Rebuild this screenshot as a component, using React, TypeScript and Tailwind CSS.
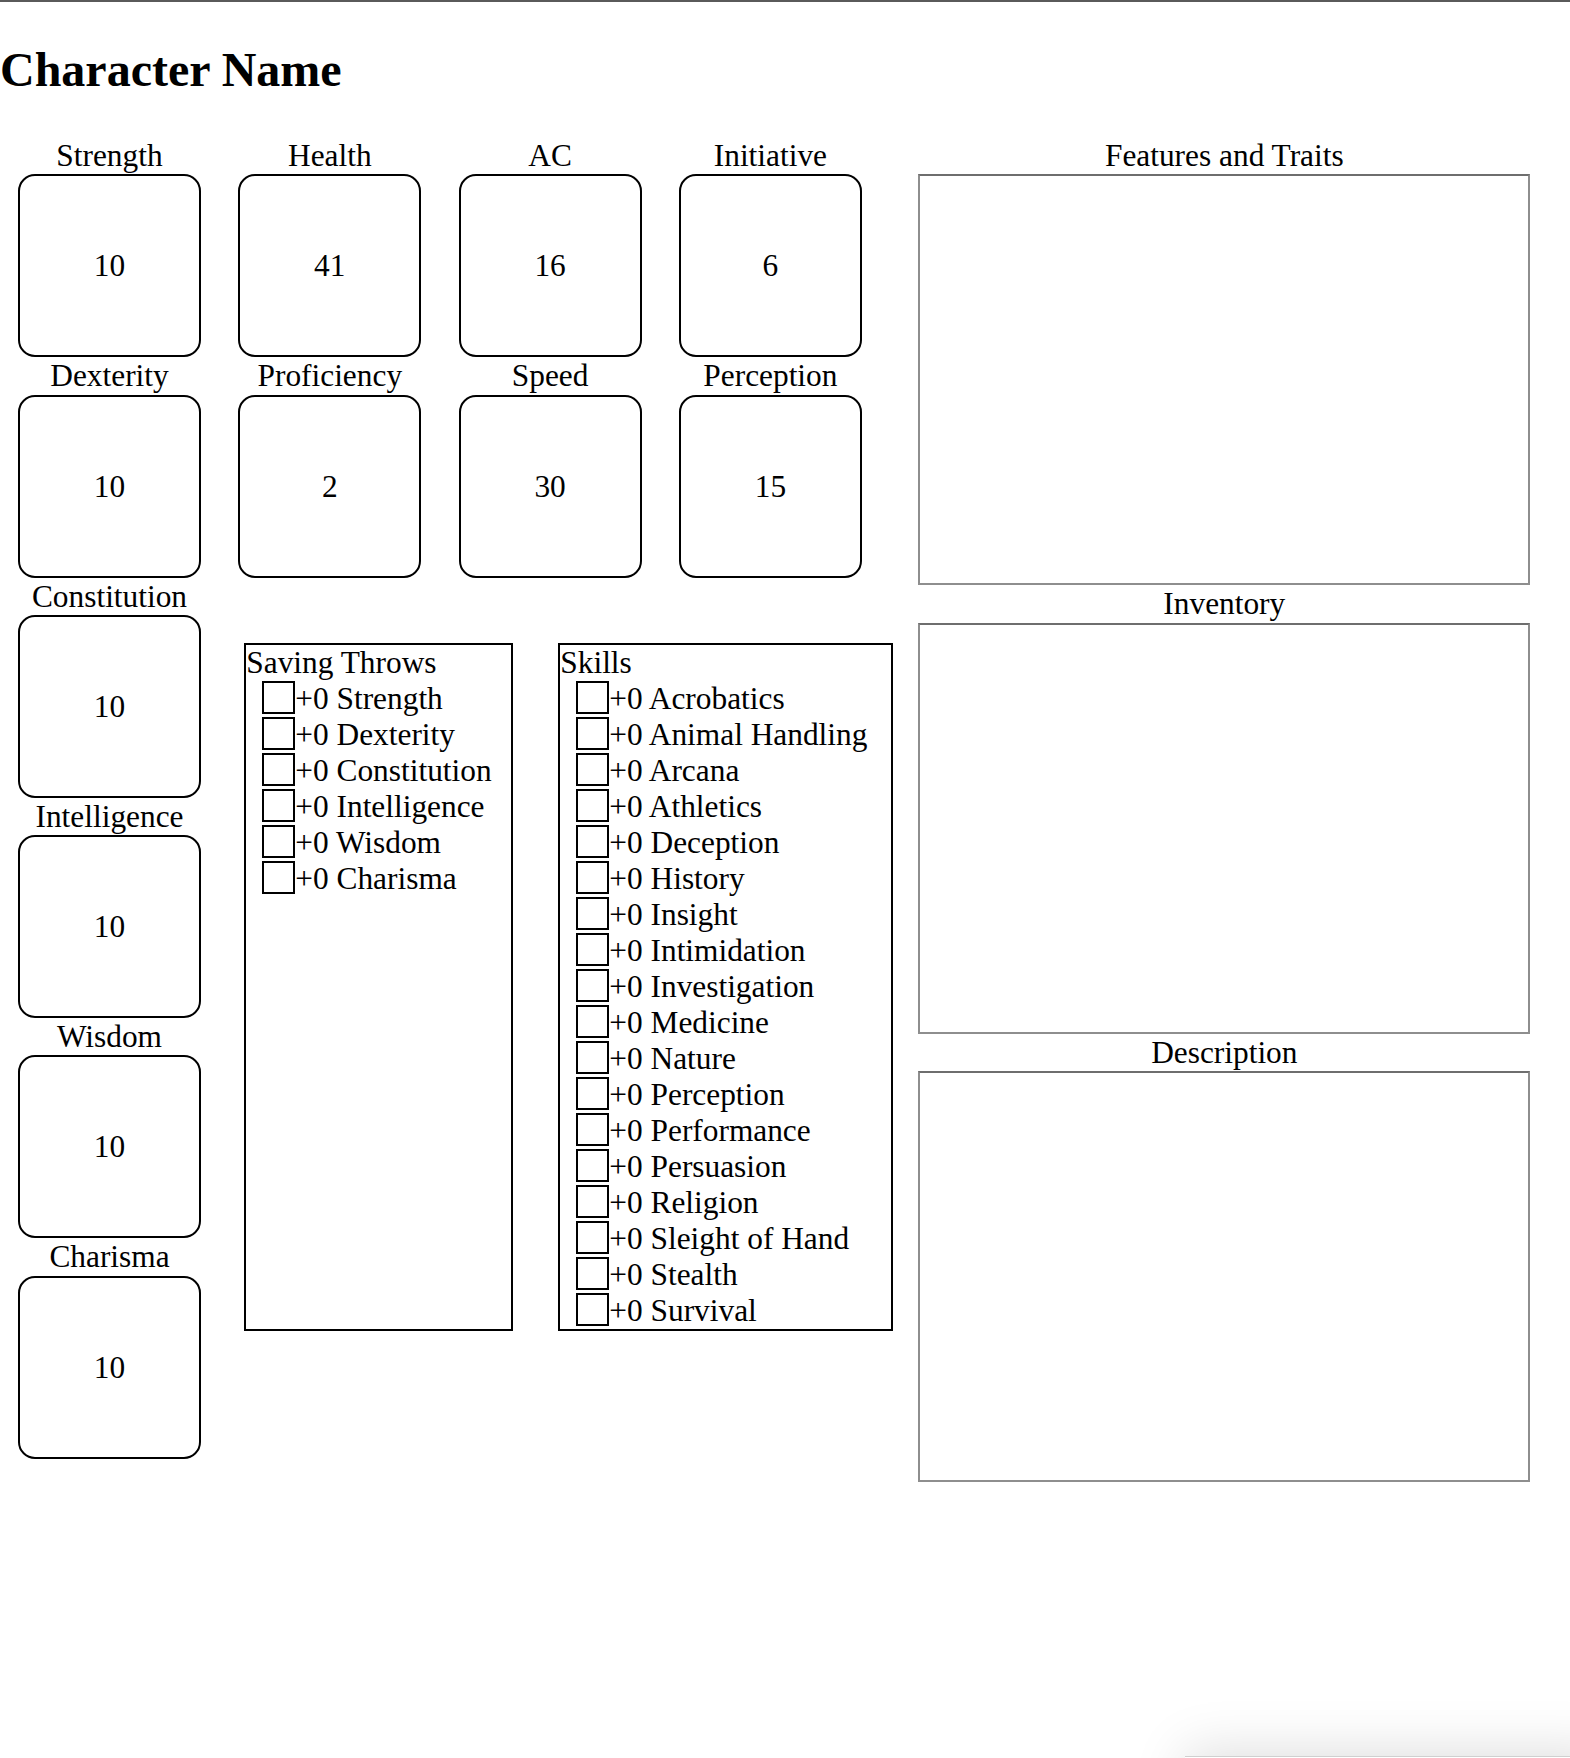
import React from "react";

const attrs = [
  { label: "Strength", value: "10" },
  { label: "Dexterity", value: "10" },
  { label: "Constitution", value: "10" },
  { label: "Intelligence", value: "10" },
  { label: "Wisdom", value: "10" },
  { label: "Charisma", value: "10" },
];

const stats = [
  { label: "Health", value: "41" },
  { label: "AC", value: "16" },
  { label: "Initiative", value: "6" },
  { label: "Proficiency", value: "2" },
  { label: "Speed", value: "30" },
  { label: "Perception", value: "15" },
];

const saves = ["Strength", "Dexterity", "Constitution", "Intelligence", "Wisdom", "Charisma"];

const skills = [
  "Acrobatics",
  "Animal Handling",
  "Arcana",
  "Athletics",
  "Deception",
  "History",
  "Insight",
  "Intimidation",
  "Investigation",
  "Medicine",
  "Nature",
  "Perception",
  "Performance",
  "Persuasion",
  "Religion",
  "Sleight of Hand",
  "Stealth",
  "Survival",
];

function StatCell({ label, value }: { label: string; value: string }) {
  return (
    <div className="flex flex-col w-[183px]">
      <div className="h-[37.3px] leading-[37px] text-center whitespace-nowrap">{label}</div>
      <div className="h-[183px] w-[183px] border-2 border-black rounded-[17px] flex items-center justify-center">
        {value}
      </div>
    </div>
  );
}

function CheckRow({ text }: { text: string }) {
  return (
    <div className="flex items-start h-[36px] pl-[16px]">
      <span className="w-[33px] h-[33px] border-2 border-black shrink-0" />
      <span className="leading-[36px] whitespace-nowrap">+0 {text}</span>
    </div>
  );
}

function RightBox({ label }: { label: string }) {
  return (
    <div className="flex flex-col w-[612px]">
      <div className="h-[37.3px] leading-[37px] text-center whitespace-nowrap">{label}</div>
      <div className="h-[411px] w-[612px] border-2 border-[#8e8e8e] border-t-[#6e6e6e]" />
    </div>
  );
}

export default function App() {
  return (
    <div
      className="relative h-[1758px] overflow-hidden bg-white border-t-2 border-[#5a5a5a] text-black text-[31.36px]"
      style={{ fontFamily: '"Liberation Serif", "Times New Roman", serif' }}
    >
      <h1 className="text-[48px] font-bold leading-[55px] mt-[40px]">Character Name</h1>

      <div className="flex mt-[40px]">
        <div className="flex ml-[18px]">
          {/* attributes column */}
          <div className="flex flex-col">
            {attrs.map((a) => (
              <StatCell key={a.label} label={a.label} value={a.value} />
            ))}
          </div>

          {/* stats + lists */}
          <div className="flex flex-col ml-[37.3px]">
            <div className="grid grid-cols-[183px_183px_183px] gap-x-[37.3px]">
              {stats.map((s) => (
                <StatCell key={s.label} label={s.label} value={s.value} />
              ))}
            </div>

            <div className="flex items-stretch mt-[65.5px] ml-[6px]">
              <div className="w-[269px] border-2 border-black">
                <div className="leading-[36px] h-[36px] whitespace-nowrap">Saving Throws</div>
                {saves.map((s) => (
                  <CheckRow key={s} text={s} />
                ))}
              </div>
              <div className="w-[335px] ml-[45px] border-2 border-black">
                <div className="leading-[36px] h-[36px] whitespace-nowrap">Skills</div>
                {skills.map((s) => (
                  <CheckRow key={s} text={s} />
                ))}
              </div>
            </div>
          </div>
        </div>

        {/* right column */}
        <div className="flex flex-col ml-[25px]">
          <RightBox label="Features and Traits" />
          <RightBox label="Inventory" />
          <RightBox label="Description" />
        </div>
      </div>

      <div className="absolute left-[1185px] top-[1754px] w-[420px] h-[200px] bg-white border-t border-[#d0d0d0] shadow-[0_-6px_50px_rgba(0,0,0,0.13)]" />
    </div>
  );
}
